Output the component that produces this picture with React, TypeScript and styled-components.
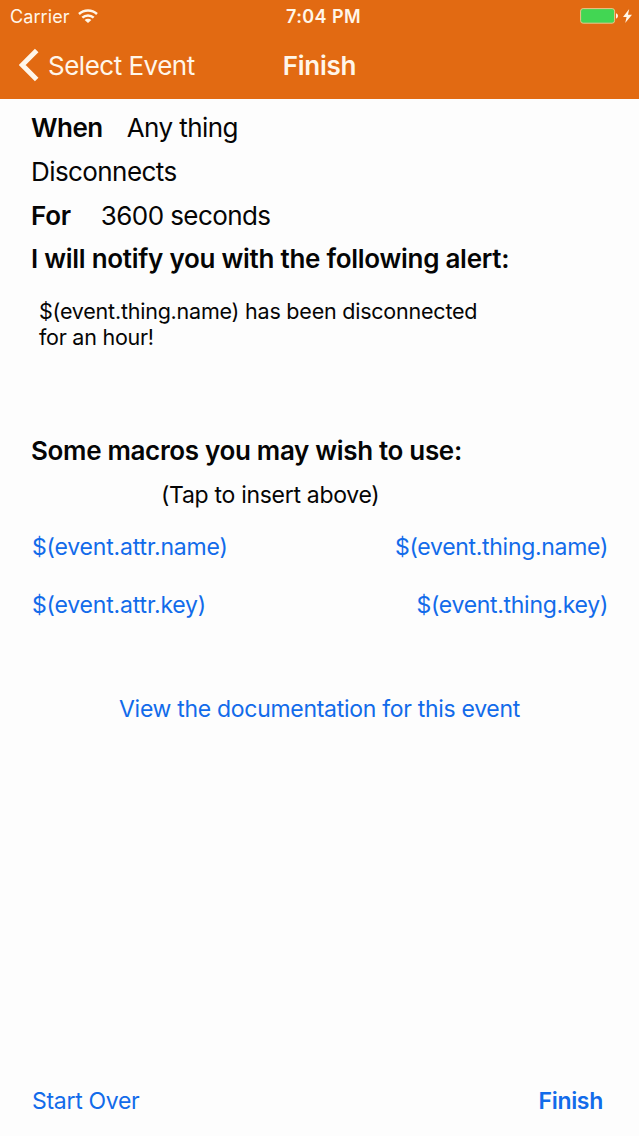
import React from "react";
import styled, { createGlobalStyle } from "styled-components";

const GlobalStyle = createGlobalStyle`
  * { box-sizing: border-box; }
  body { margin: 0; background: #fdfdfd; font-family: Inter, "Liberation Sans", sans-serif; }
`;

const Screen = styled.div`
  height: 1136px;
  display: flex;
  flex-direction: column;
  background: #fdfdfd;
  color: #050505;
`;

const Label = styled.span<{ $size?: number; $bold?: boolean; $track?: number }>`
  display: block;
  font-size: ${(p) => p.$size ?? 26}px;
  font-weight: ${(p) => (p.$bold ? 600 : 400)};
  letter-spacing: ${(p) => p.$track ?? (p.$bold ? -0.27 : -0.58)}px;
  white-space: nowrap;
`;

const Small = styled(Label).attrs({ $size: 23 })`
  letter-spacing: ${(p) => p.$track ?? -0.3}px;
`;

const Header = styled.header`
  height: 99px;
  background: #e26a12;
  color: #fff6e9;
`;

const StatusBar = styled.div`
  height: 32px;
  display: grid;
  grid-template-columns: 1fr auto 1fr;
  align-items: center;
  padding: 0 7px 0 10px;
`;

const StatusGroup = styled.div<{ $end?: boolean }>`
  display: flex;
  align-items: center;
  justify-content: ${(p) => (p.$end ? "flex-end" : "flex-start")};
  gap: ${(p) => (p.$end ? 4 : 8)}px;
`;

const Clock = styled(Label).attrs({ $size: 18, $track: 0.4, $bold: true })`
  padding-left: 5px;
`;

const NavBar = styled.nav`
  height: 66px;
  display: grid;
  grid-template-columns: 1fr auto 1fr;
  align-items: center;
  padding-left: 19px;
  padding-right: 19px;
`;

const BackButton = styled.button`
  display: flex;
  align-items: center;
  gap: 9px;
  padding: 0;
  border: 0;
  background: none;
  color: inherit;
  font-family: inherit;
`;

const Content = styled.main`
  flex: 1;
  display: flex;
  flex-direction: column;
  padding: 7px 31px 0;
`;

const Row = styled.div<{ $gap?: number; $indent?: number }>`
  height: 43.7px;
  display: flex;
  align-items: center;
  gap: ${(p) => p.$gap ?? 0}px;
  padding-left: ${(p) => p.$indent ?? 0}px;
`;

const Message = styled.div`
  height: 148px;
  padding: 17px 8px 0;
  line-height: 26.4px;
`;

const Action = styled.button`
  padding: 0;
  border: 0;
  background: none;
  color: #126bea;
  font-family: inherit;
`;

const Macros = styled.div`
  display: flex;
  flex-direction: column;
  padding-top: 1px;
`;

const Pair = styled.div`
  height: 58.8px;
  display: flex;
  align-items: center;
  justify-content: space-between;
  padding-left: 1px;
`;

const Documentation = styled.div`
  height: 148px;
  display: flex;
  align-items: center;
  justify-content: center;
`;

const Footer = styled.footer`
  height: 70px;
  display: flex;
  align-items: center;
  justify-content: space-between;
  padding: 0 36px 0 32px;
`;

const WifiIcon = () => (
  <svg width="20" height="15" viewBox="0 0 20 15" fill="none" stroke="currentColor" strokeWidth="2.5">
    <path d="M1 5C6 .4 14 .4 19 5" />
    <path d="M4.3 8.7c3.2-3 8.2-3 11.4 0" />
    <path d="M10 14L6.6 10.9c1.9-1.6 4.9-1.6 6.8 0z" fill="currentColor" stroke="none" />
  </svg>
);

const BatteryIcon = () => (
  <svg width="39" height="16" viewBox="0 0 39 16">
    <rect x=".6" y=".6" width="34" height="14.6" rx="2.5" fill="#42d653" stroke="#eec38c" />
    <path d="M36 5.2c2.6.8 2.6 4.6 0 5.4z" fill="#fff6e9" />
  </svg>
);

const BoltIcon = () => (
  <svg width="9" height="14" viewBox="0 0 9 14">
    <path d="M6.2 0L0 8h3.6L2.2 14 9 5.7H5z" fill="#fff6e9" />
  </svg>
);

const BackIcon = () => (
  <svg width="20" height="34" viewBox="0 0 20 34">
    <path d="M17.7 2.5L3.2 17l14.5 14.5" fill="none" stroke="currentColor" strokeWidth="5" />
  </svg>
);

export default function App() {
  return (
    <>
      <GlobalStyle />
      <Screen>
        <Header>
          <StatusBar>
            <StatusGroup>
              <Label $size={18} $track={0.1}>Carrier</Label>
              <WifiIcon />
            </StatusGroup>
            <Clock>7:04 PM</Clock>
            <StatusGroup $end>
              <BatteryIcon />
              <BoltIcon />
            </StatusGroup>
          </StatusBar>
          <NavBar>
            <BackButton>
              <BackIcon />
              <Label $track={-0.5}>Select Event</Label>
            </BackButton>
            <Label $bold>Finish</Label>
          </NavBar>
        </Header>
        <Content>
          <Row $gap={24}>
            <Label $bold $track={-0.5}>When</Label>
            <Label>Any thing</Label>
          </Row>
          <Row><Label>Disconnects</Label></Row>
          <Row $gap={30}>
            <Label $bold>For</Label>
            <Label>3600 seconds</Label>
          </Row>
          <Row><Label $bold>I will notify you with the following alert:</Label></Row>
          <Message>
            <Label $size={21.5} $track={-0.22}>$(event.thing.name) has been disconnected</Label>
            <Label $size={21.5} $track={-0.25}>for an hour!</Label>
          </Message>
          <Row><Label $bold $track={-0.33}>Some macros you may wish to use:</Label></Row>
          <Macros>
            <Row $indent={130}><Small>(Tap to insert above)</Small></Row>
            <Pair>
              <Action><Small $track={-0.18}>$(event.attr.name)</Small></Action>
              <Action><Small>$(event.thing.name)</Small></Action>
            </Pair>
            <Pair>
              <Action><Small $track={-0.18}>$(event.attr.key)</Small></Action>
              <Action><Small>$(event.thing.key)</Small></Action>
            </Pair>
          </Macros>
          <Documentation>
            <Action><Small>View the documentation for this event</Small></Action>
          </Documentation>
        </Content>
        <Footer>
          <Action><Small>Start Over</Small></Action>
          <Action><Small $bold>Finish</Small></Action>
        </Footer>
      </Screen>
    </>
  );
}
